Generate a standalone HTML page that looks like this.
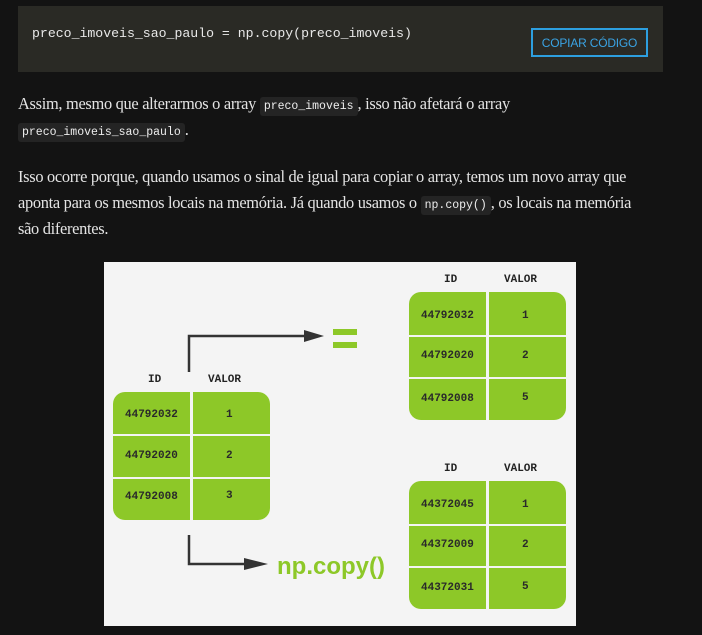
<!DOCTYPE html>
<html><head><meta charset="utf-8"><style>
body{margin:0;width:702px;height:635px;background:#131313;position:relative;overflow:hidden;font-family:"Liberation Serif",serif;color:#e4e4e4}
.code{position:absolute;left:18px;top:6px;width:645px;height:66px;background:#2a2a25}
.code pre{margin:0;position:absolute;left:14px;top:20px;font:13.2px "Liberation Mono",monospace;color:#e8e8e8}
.btn{position:absolute;left:513px;top:22px;width:113px;height:25px;border:2px solid #2d9fe0;color:#3aa3e3;font:12px "Liberation Sans",sans-serif;text-align:center;line-height:26px;letter-spacing:-0.2px}
p{position:absolute;left:18px;margin:0;font-size:16.4px;line-height:26px;width:680px;letter-spacing:-0.3px;white-space:nowrap}
code{font:11.5px "Liberation Mono",monospace;background:#242424;padding:3px 4px;border-radius:3px;color:#eee;letter-spacing:0}
.img{position:absolute;left:104px;top:262px;width:472px;height:364px;background:#f4f4f4}
.t{position:absolute;width:157px;height:128px;background:#8dc828;border-radius:12px;overflow:hidden}
.t div{position:absolute;font:bold 11px "Liberation Mono",monospace;color:#2a2a2a}
.h{position:absolute;font:bold 11px "Liberation Mono",monospace;color:#222}
</style></head><body>
<div class="code"><pre>preco_imoveis_sao_paulo = np.copy(preco_imoveis)</pre><div class="btn">COPIAR CÓDIGO</div></div>
<p style="top:91px">Assim, mesmo que alterarmos o array <code>preco_imoveis</code>, isso não afetará o array<br><code>preco_imoveis_sao_paulo</code>.</p>
<p style="top:164px">Isso ocorre porque, quando usamos o sinal de igual para copiar o array, temos um novo array que<br>aponta para os mesmos locais na memória. Já quando usamos o <code>np.copy()</code>, os locais na memória<br>são diferentes.</p>
<div class="img">
<svg width="472" height="364" style="position:absolute;left:0;top:0">
<g stroke="#333" stroke-width="2.5" fill="none"><path d="M85 110V74H205"/><path d="M85 273V302H140"/></g>
<path d="M200 68L220 74L200 80Z" fill="#333"/><path d="M140 296L164 302L140 308Z" fill="#333"/>
<rect x="229" y="67" width="24" height="6" fill="#8dc828"/><rect x="229" y="80" width="24" height="6" fill="#8dc828"/>
<text x="173" y="312" font-family="Liberation Sans,sans-serif" font-weight="bold" font-size="24" fill="#8dc828">np.copy()</text>
</svg>
<div class="h" style="left:44px;top:112px">ID</div><div class="h" style="left:104px;top:112px">VALOR</div>
<div class="t" style="left:9px;top:130px">
<div style="left:77px;top:0;width:3px;height:128px;background:#f4f4f4"></div>
<div style="left:0;top:42px;width:157px;height:2px;background:#f4f4f4"></div>
<div style="left:0;top:85px;width:157px;height:2px;background:#f4f4f4"></div>
<div style="left:12px;top:17px">44792032</div><div style="left:113px;top:17px">1</div>
<div style="left:12px;top:58px">44792020</div><div style="left:113px;top:58px">2</div>
<div style="left:12px;top:99px">44792008</div><div style="left:113px;top:98px">3</div></div>
<div class="h" style="left:340px;top:12px">ID</div><div class="h" style="left:400px;top:12px">VALOR</div>
<div class="t" style="left:305px;top:30px">
<div style="left:77px;top:0;width:3px;height:128px;background:#f4f4f4"></div>
<div style="left:0;top:43px;width:157px;height:2px;background:#f4f4f4"></div>
<div style="left:0;top:85px;width:157px;height:2px;background:#f4f4f4"></div>
<div style="left:12px;top:18px">44792032</div><div style="left:113px;top:18px">1</div>
<div style="left:12px;top:58px">44792020</div><div style="left:113px;top:58px">2</div>
<div style="left:12px;top:101px">44792008</div><div style="left:113px;top:100px">5</div></div>
<div class="h" style="left:340px;top:201px">ID</div><div class="h" style="left:400px;top:201px">VALOR</div>
<div class="t" style="left:305px;top:219px">
<div style="left:77px;top:0;width:3px;height:128px;background:#f4f4f4"></div>
<div style="left:0;top:43px;width:157px;height:2px;background:#f4f4f4"></div>
<div style="left:0;top:85px;width:157px;height:2px;background:#f4f4f4"></div>
<div style="left:12px;top:18px">44372045</div><div style="left:113px;top:18px">1</div>
<div style="left:12px;top:58px">44372009</div><div style="left:113px;top:58px">2</div>
<div style="left:12px;top:101px">44372031</div><div style="left:113px;top:100px">5</div></div>
</div>
</body></html>
